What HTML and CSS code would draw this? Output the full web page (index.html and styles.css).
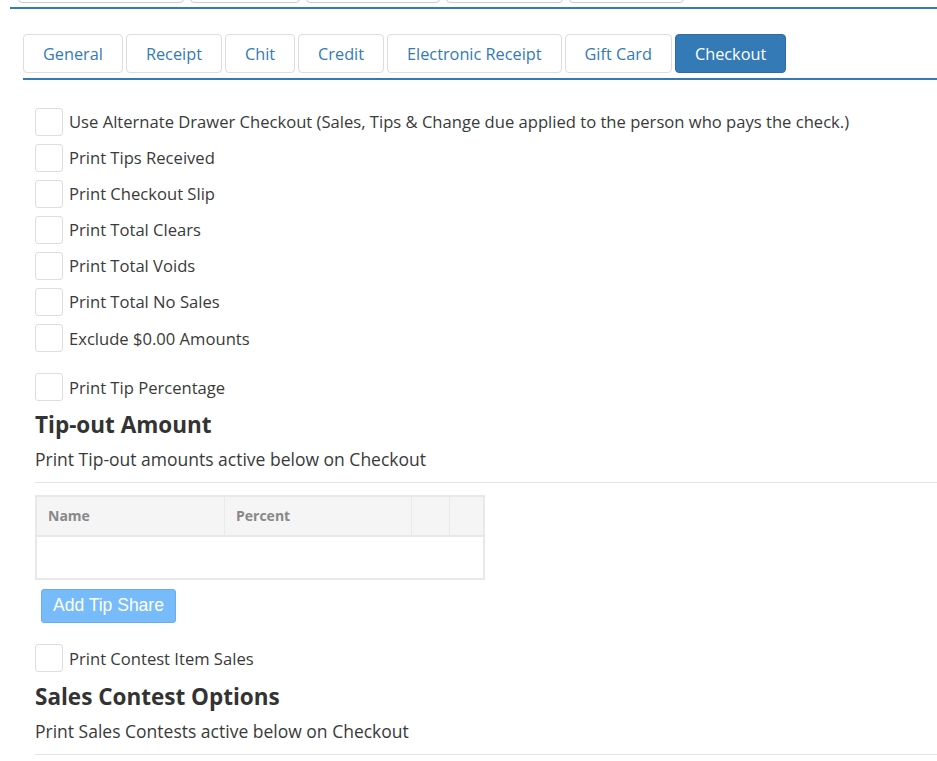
FILE: index.html
```html
<!DOCTYPE html>
<html lang="en">
<head>
<meta charset="utf-8">
<title>Checkout settings</title>
<link rel="stylesheet" href="styles.css">
</head>
<body>
<div class="page">
  <div class="outer-tabs">
    <span class="otab w1"></span>
    <span class="otab w2"></span>
    <span class="otab w3"></span>
    <span class="otab w4"></span>
    <span class="otab w5"></span>
  </div>
  <div class="panel">
    <ul class="tabs">
      <li class="tab">General</li>
      <li class="tab">Receipt</li>
      <li class="tab">Chit</li>
      <li class="tab">Credit</li>
      <li class="tab">Electronic Receipt</li>
      <li class="tab">Gift Card</li>
      <li class="tab active">Checkout</li>
    </ul>
    <div class="content">
      <label class="row"><input type="checkbox" class="cb"><span>Use Alternate Drawer Checkout (Sales, Tips &amp; Change due applied to the person who pays the check.)</span></label>
      <label class="row"><input type="checkbox" class="cb"><span>Print Tips Received</span></label>
      <label class="row"><input type="checkbox" class="cb"><span>Print Checkout Slip</span></label>
      <label class="row"><input type="checkbox" class="cb"><span>Print Total Clears</span></label>
      <label class="row"><input type="checkbox" class="cb"><span>Print Total Voids</span></label>
      <label class="row"><input type="checkbox" class="cb"><span>Print Total No Sales</span></label>
      <label class="row group-end"><input type="checkbox" class="cb"><span>Exclude $0.00 Amounts</span></label>
      <label class="row last"><input type="checkbox" class="cb"><span>Print Tip Percentage</span></label>

      <h3 class="section-title">Tip-out Amount</h3>
      <p class="section-desc">Print Tip-out amounts active below on Checkout</p>
      <hr class="divider">

      <table class="grid">
        <colgroup>
          <col class="c-name"><col class="c-pct"><col class="c-a"><col class="c-b">
        </colgroup>
        <thead>
          <tr><th>Name</th><th>Percent</th><th></th><th></th></tr>
        </thead>
        <tbody>
          <tr><td></td><td></td><td></td><td></td></tr>
        </tbody>
      </table>
      <button class="btn" type="button" disabled>Add Tip Share</button>

      <label class="row last after-btn"><input type="checkbox" class="cb"><span>Print Contest Item Sales</span></label>
      <h3 class="section-title">Sales Contest Options</h3>
      <p class="section-desc">Print Sales Contests active below on Checkout</p>
      <hr class="divider">
    </div>
  </div>
</div>
</body>
</html>
```

FILE: styles.css
```css
* { box-sizing: border-box; }
html, body { margin: 0; padding: 0; background: #fff; }
body {
  font-family: "Open Sans", "Noto Sans", "DejaVu Sans", sans-serif;
  color: #333;
  font-size: 16px;
  overflow: hidden;
}
.page { width: 937px; }

.outer-tabs {
  margin-left: 10px;
  padding: 0 0 4px 8px;
  display: flex;
  gap: 6px;
  border-bottom: 2px solid #337ab7;
}
.otab {
  display: block;
  height: 38px;
  margin-top: -35px;
  border: 1px solid #ccc;
  border-radius: 4px;
  background: #fff;
}
.w1 { width: 166px; }
.w2 { width: 110px; }
.w3 { width: 134px; }
.w4 { width: 117px; }
.w5 { width: 115px; }

.panel { padding: 25px 0 0 23px; }

.tabs {
  list-style: none;
  margin: 0;
  padding: 0 0 5px 0;
  display: flex;
  gap: 3px;
  border-bottom: 2px solid #337ab7;
}
.tab {
  height: 39px;
  padding: 0 19px;
  display: flex;
  align-items: center;
  border: 1px solid #ddd;
  border-radius: 4px;
  color: #337ab7;
  font-size: 16.3px;
  background: #fff;
}
.tab.active {
  background: #337ab7;
  border-color: #2e6da4;
  color: #fff;
}

.content { padding: 28px 0 0 12px; }

.row {
  display: flex;
  align-items: center;
  height: 27px;
  margin-bottom: 9.1px;
  font-size: 16.6px;
  color: #3a3a3a;
}
.row.group-end { margin-bottom: 22px; }
.row.last { margin-bottom: 0; }
.row.after-btn { margin-top: 22px; }

.cb {
  appearance: none;
  -webkit-appearance: none;
  width: 28px;
  height: 28px;
  margin: 0 6px 0 0;
  border: 1px solid #ddd;
  border-radius: 3px;
  background: #fff;
  flex: none;
}

.section-title {
  margin: 11px 0 0 0;
  font-size: 22.5px;
  line-height: 26px;
  font-weight: 700;
  color: #333;
}
.row.after-btn + .section-title { margin-top: 12px; }
.section-desc {
  margin: 9px 0 0 0;
  font-size: 17.5px;
  line-height: 24px;
  color: #3a3a3a;
}
.divider {
  margin: 11px 0 0 0;
  border: 0;
  border-top: 1px solid #e5e5e5;
  height: 0;
}

.grid {
  margin-top: 12px;
  width: 450px;
  border-collapse: separate;
  border-spacing: 0;
  border: 2px solid #e8e8e8;
  table-layout: fixed;
}
.c-name { width: 187px; }
.c-pct { width: 187px; }
.c-a { width: 38px; }
.c-b { width: 34px; }
.grid th {
  height: 40px;
  background: #f5f5f5;
  text-align: left;
  padding: 0 11px;
  font-size: 14px;
  font-weight: 700;
  color: #888;
  border-left: 1px solid #eaeaea;
  border-bottom: 2px solid #e8e8e8;
}
.grid th:first-child { border-left: 0; }
.grid td {
  height: 41px;
  border: 0;
}

.btn {
  display: block;
  margin: 9px 0 0 6px;
  height: 34px;
  padding: 0 11px;
  background: #77bbfb;
  border: 1px solid #6aaee8;
  border-radius: 3px;
  color: #fff;
  font-family: "Liberation Sans", Arial, sans-serif;
  font-size: 17.5px;
}
```
